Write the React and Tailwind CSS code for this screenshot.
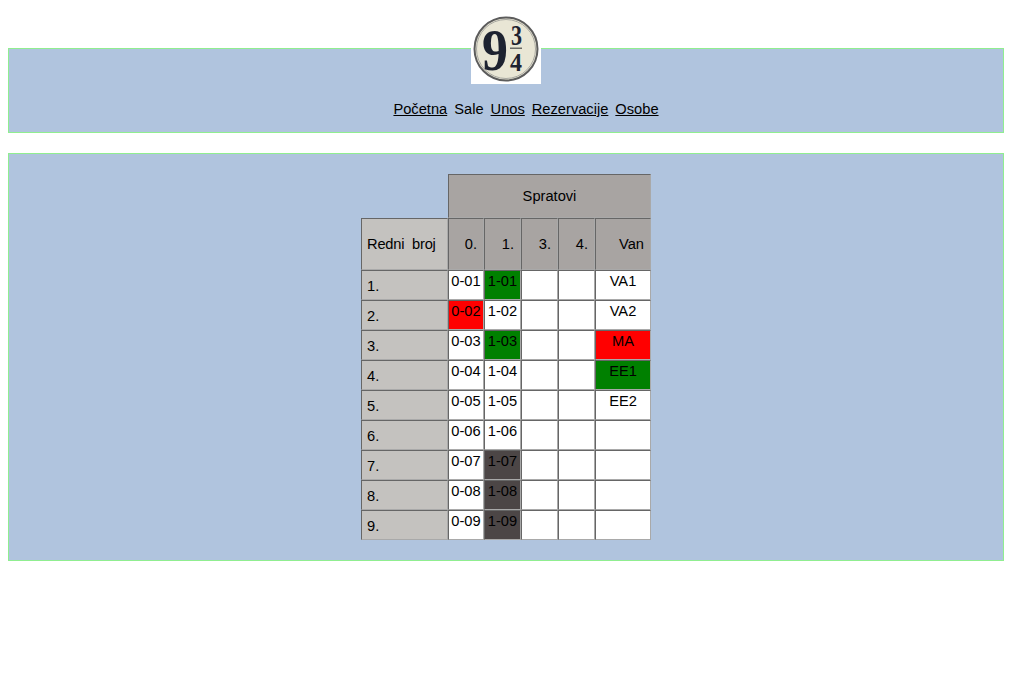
const rows = [
  { n: "1.", a: "0-01", b: "1-01", bc: "bg-[#008000]", v: "VA1" },
  { n: "2.", a: "0-02", ac: "bg-[#ff0000]", b: "1-02", v: "VA2" },
  { n: "3.", a: "0-03", b: "1-03", bc: "bg-[#008000]", v: "MA", vc: "bg-[#ff0000]" },
  { n: "4.", a: "0-04", b: "1-04", v: "EE1", vc: "bg-[#008000]" },
  { n: "5.", a: "0-05", b: "1-05", v: "EE2" },
  { n: "6.", a: "0-06", b: "1-06", v: "" },
  { n: "7.", a: "0-07", b: "1-07", bc: "bg-[#4c4646]", v: "" },
  { n: "8.", a: "0-08", b: "1-08", bc: "bg-[#4c4646]", v: "" },
  { n: "9.", a: "0-09", b: "1-09", bc: "bg-[#4c4646]", v: "" },
];

const edges = "border-t border-l border-r border-b border-t-[#666666] border-l-[#666666] border-r-[#a9a9a9] border-b-[#a9a9a9]";
const cellBase = `${edges} p-0 align-top text-center leading-[20px]`;
const headCell = `${edges} bg-[#a8a4a2] font-normal text-right pr-[6px] align-middle`;
const labelCell = `${edges} bg-[#c4c2bf] font-normal text-left pl-[5px] align-middle`;

function Logo() {
  return (
    <div className="relative z-10 mx-auto -mt-[35px] w-[70px] h-[70px] bg-white">
      <svg width="70" height="70" viewBox="0 0 70 70">
        <circle cx="35" cy="35" r="31.5" fill="#e9e6d5" stroke="#5c5c5c" strokeWidth="2" />
        <circle cx="35" cy="35" r="29.5" fill="none" stroke="#a9a9a2" strokeWidth="1" />
        <text x="11" y="56" textLength="26" lengthAdjust="spacingAndGlyphs" fontFamily="'Liberation Serif', serif" fontWeight="700" fontSize="60" fill="#1d2230">9</text>
        <text x="40" y="31" textLength="11" lengthAdjust="spacingAndGlyphs" fontFamily="'Liberation Serif', serif" fontWeight="700" fontSize="30" fill="#1d2230">3</text>
        <rect x="39" y="33.5" width="12" height="1.5" fill="#6a6a66" />
        <text x="39" y="57" textLength="12" lengthAdjust="spacingAndGlyphs" fontFamily="'Liberation Serif', serif" fontWeight="700" fontSize="26" fill="#1d2230">4</text>
      </svg>
    </div>
  );
}

export default function App() {
  return (
    <div className="min-h-screen bg-white px-2 text-black text-[14.67px] font-['Liberation_Sans',Arial,sans-serif]">
      <div className="pt-[48px]">
        <div className="h-[85px] border border-[#90ee90] bg-[#b0c4de]">
          <Logo />
          <nav className="mt-[16px] pl-[40px] flex justify-center gap-[7px] leading-[18px]">
            <a className="underline" href="#">Početna</a>
            <span>Sale</span>
            <a className="underline" href="#">Unos</a>
            <a className="underline" href="#">Rezervacije</a>
            <a className="underline" href="#">Osobe</a>
          </nav>
        </div>
      </div>

      <div className="mt-[20px] h-[408px] border border-[#90ee90] bg-[#b0c4de] pt-[20px]">
        <table className="table-fixed border-separate border-spacing-0 w-[290px] ml-[352px]">
          <colgroup>
            <col className="w-[87px]" />
            <col className="w-[36px]" />
            <col className="w-[37px]" />
            <col className="w-[37px]" />
            <col className="w-[37px]" />
            <col className="w-[56px]" />
          </colgroup>
          <thead>
            <tr className="h-[44px]">
              <th></th>
              <th colSpan={5} className={`${edges} bg-[#a8a4a2] font-normal text-center align-middle`}>Spratovi</th>
            </tr>
            <tr className="h-[52px]">
              <th className={`${labelCell} whitespace-pre tracking-[-0.2px]`}>Redni  broj</th>
              <th className={headCell}>0.</th>
              <th className={headCell}>1.</th>
              <th className={headCell}>3.</th>
              <th className={headCell}>4.</th>
              <th className={headCell}>Van</th>
            </tr>
          </thead>
          <tbody>
            {rows.map((r) => (
              <tr key={r.n} className="h-[30px]">
                <td className={`${labelCell} pt-[2px]`}>{r.n}</td>
                <td className={`${cellBase} ${r.ac || "bg-white"}`}>{r.a}</td>
                <td className={`${cellBase} ${r.bc || "bg-white"}`}>{r.b}</td>
                <td className={`${cellBase} bg-white`}></td>
                <td className={`${cellBase} bg-white`}></td>
                <td className={`${cellBase} ${r.vc || "bg-white"}`}>{r.v}</td>
              </tr>
            ))}
          </tbody>
        </table>
      </div>
    </div>
  );
}
